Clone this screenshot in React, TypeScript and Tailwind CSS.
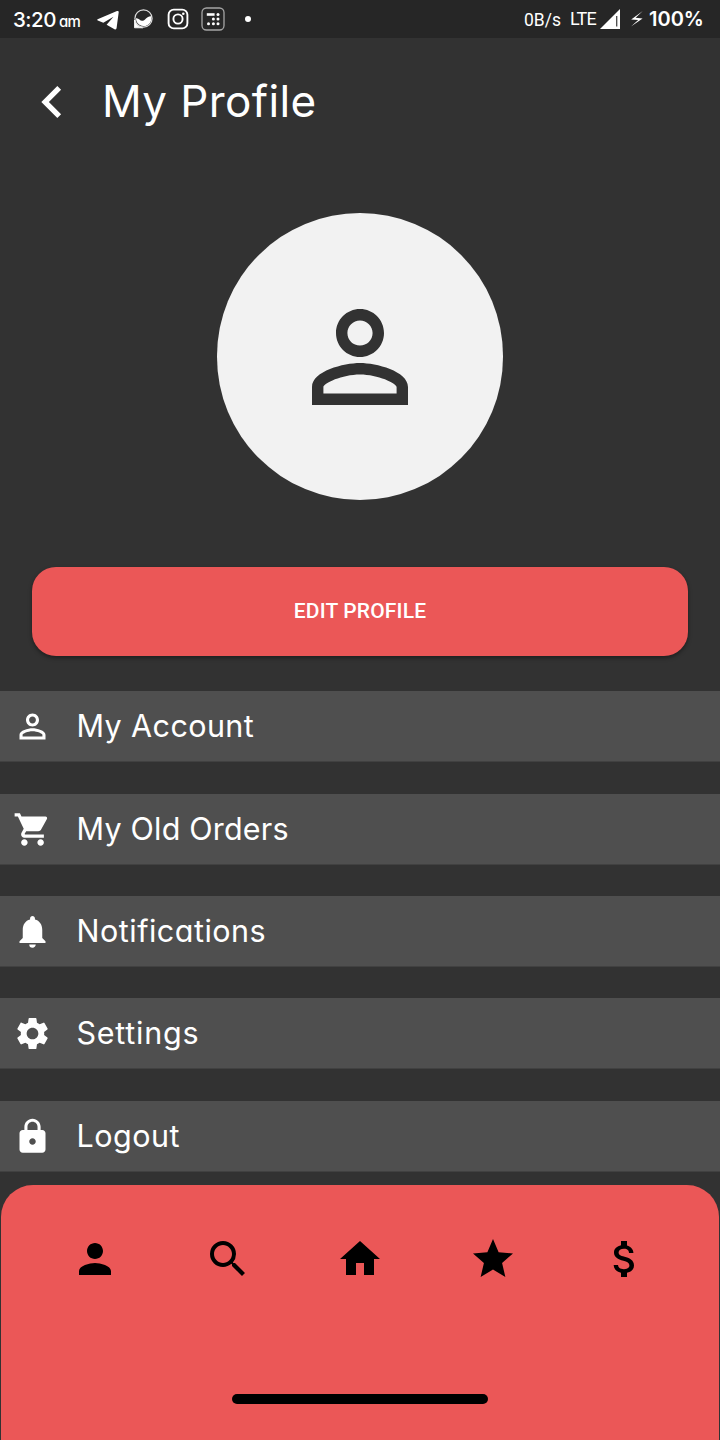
import React from "react";
import {
  MdAttachMoney,
  MdChevronLeft,
  MdHome,
  MdLock,
  MdNotifications,
  MdPerson,
  MdSearch,
  MdSettings,
  MdShoppingCart,
} from "react-icons/md";

function PersonOutline({ className }: { className: string }) {
  return (
    <svg viewBox="0 0 24 24" fill="currentColor" className={className}>
      <path d="M12 5.9c1.16 0 2.1.94 2.1 2.1s-.94 2.1-2.1 2.1S9.9 9.16 9.9 8s.94-2.1 2.1-2.1m0 9c2.97 0 6.1 1.46 6.1 2.1v1.1H5.9V17c0-.64 3.13-2.1 6.1-2.1M12 4C9.79 4 8 5.79 8 8s1.79 4 4 4 4-1.79 4-4-1.79-4-4-4zm0 9c-2.67 0-8 1.34-8 4v3h16v-3c0-2.66-5.33-4-8-4z" />
    </svg>
  );
}

function Star({ className }: { className: string }) {
  return (
    <svg viewBox="0 0 24 24" fill="currentColor" className={className}>
      <path d="M12 17.27 18.18 21l-1.64-7.03L22 9.24l-7.19-.61L12 2 9.19 8.63 2 9.24l5.46 4.73L5.82 21z" />
    </svg>
  );
}

function StatusBar() {
  return (
    <div className="flex h-[38px] shrink-0 items-center justify-between bg-[#262626] pl-[13px] pr-[17px]">
      <div className="flex items-center">
        <div className="flex w-[84px] items-baseline gap-[3px] whitespace-nowrap pt-[3px]">
          <span className="text-[20.5px] font-medium leading-6 tracking-[-0.5px]">3:20</span>
          <span className="text-[15px] font-medium leading-6 tracking-[-0.6px]">am</span>
        </div>
        <svg viewBox="0 0 22 20" className="mt-px h-5 w-[22px]" fill="#fff">
          <path d="M0.6 9.200 20 1.100q1.800-.6 1.700 1.200L19.600 18q-.3 2-2.100 1.200L9.600 14.800l6.900-8.100-10.200 6L0.800 10.600q-1-.7-.2-1.400z" />
        </svg>
        <svg viewBox="0 0 20 20" className="ml-[14px] h-5 w-5" fill="none">
          <circle cx="10.5" cy="9.5" r="8.600" stroke="#ddd" strokeWidth="1.200" />
          <path d="M1.500 11v7.800h8.200C5.500 18.200 2.300 15 1.500 11z" fill="#fff" stroke="#fff" strokeWidth=".8" />
          <path d="M3 9.200c2.700-.5 4 2.600 6 2.600 3.200 0 4.600-4.800 9-4.600 1.500 5-2 10.100-7.700 9.900C6 16.600 3 13.300 3 9.200z" fill="#fff" />
        </svg>
        <svg viewBox="0 0 22 22" className="ml-[14px] h-[22px] w-[22px]" fill="none" stroke="#fff" strokeWidth="1.900">
          <rect x="1.600" y="1.600" width="18.800" height="18.800" rx="5.200" />
          <circle cx="11" cy="11" r="4.600" />
          <circle cx="16.300" cy="5.700" r="1.300" fill="#fff" stroke="none" />
        </svg>
        <svg viewBox="0 0 24 24" className="ml-3 h-6 w-6" fill="none">
          <rect x="1" y="1" width="22" height="22" rx="4.500" stroke="#a5a5a5" strokeWidth="1.300" />
          <path d="M5.800 6.200h7.800v2.600H5.800z" fill="#fff" />
          <g fill="#fff">
            <circle cx="17" cy="7.500" r="1.500" />
            <circle cx="12.400" cy="12" r="1.500" />
            <circle cx="17" cy="12" r="1.500" />
            <circle cx="7.500" cy="16.700" r="1.500" />
            <circle cx="12.400" cy="16.700" r="1.500" />
            <circle cx="17" cy="16.700" r="1.500" />
          </g>
        </svg>
        <span className="ml-5 h-[6px] w-[6px] rounded-full bg-white" />
      </div>
      <div className="flex items-center whitespace-nowrap">
        <span className="w-[46px] pt-[2px] font-[Roboto,sans-serif] text-[17.5px] leading-6">0B/s</span>
        <span className="w-[30px] font-[Roboto,sans-serif] text-[18px] leading-6 tracking-[-0.8px]">LTE</span>
        <svg viewBox="0 0 20 20" className="h-5 w-5">
          <path d="M20 0v20H0z" fill="#fff" />
          <path d="M16.200 7h1.100v10.500h-1.100z" fill="#262626" />
        </svg>
        <svg viewBox="0 0 14 18" className="ml-[10px] h-[18px] w-[14px]" fill="#fff">
          <path d="M12.800 1 1.200 9.400 8.200 9.900 1 16.600 12.600 8.400 5.600 7.800z" />
        </svg>
        <span className="ml-[5px] w-[54px] text-[20px] font-semibold leading-6">100%</span>
      </div>
    </div>
  );
}

const rowIcon = "h-[39px] w-[39px] shrink-0";

const rows = [
  { label: "My Account", icon: <PersonOutline className={rowIcon} />, style: "mb-8", text: "tracking-[0.4px] text-[30.5px]" },
  { label: "My Old Orders", icon: <MdShoppingCart className={rowIcon} />, style: "mb-[31px]", text: "tracking-[0.2px] text-[30.5px]" },
  { label: "Notifications", icon: <MdNotifications className={rowIcon} />, style: "mb-[31px]", text: "tracking-[0.5px] text-[30.5px]" },
  { label: "Settings", icon: <MdSettings className={rowIcon} />, style: "mb-8", text: "tracking-[0.75px] text-[30.5px]" },
  { label: "Logout", icon: <MdLock className={rowIcon} />, style: "mb-[13px]", text: "tracking-[0.5px] text-[30.5px]" },
];

export default function App() {
  return (
    <div className="flex h-[1440px] w-[720px] flex-col overflow-hidden bg-[#323232] font-[Inter,sans-serif] text-white [font-feature-settings:'cv11']">
      <StatusBar />
      <header className="mt-8 flex h-16 shrink-0 items-center pl-5">
        <MdChevronLeft className="h-16 w-16" />
        <h1 className="ml-[18px] whitespace-nowrap pb-[2px] text-[44px] font-normal leading-[62px] tracking-[0.4px]">My Profile</h1>
      </header>
      <div className="mx-auto mt-[79px] flex h-[287px] w-[286px] shrink-0 items-center justify-center rounded-full bg-[#f2f2f2] text-[#323232]">
        <PersonOutline className="h-36 w-36" />
      </div>
      <button className="mx-8 mt-[67px] h-[89px] shrink-0 rounded-[24px] bg-[#eb5757] pb-px font-[Roboto,sans-serif] text-[21px] font-medium leading-6 tracking-[0.15px] shadow-[0_2px_4px_rgba(0,0,0,0.4)]">
        EDIT PROFILE
      </button>
      <ul className="mt-[35px]">
        {rows.map((row) => (
          <li key={row.label} className={`flex h-[71px] items-center border-b border-[#414141] bg-[#4f4f4f] pl-[12.5px] ${row.style}`}>
            {row.icon}
            <span className={`ml-[25px] whitespace-nowrap leading-10 ${row.text}`}>{row.label}</span>
          </li>
        ))}
      </ul>
      <nav className="mx-px flex flex-1 flex-col items-center rounded-t-[32px] bg-[#eb5757] text-black">
        <div className="mt-[50px] flex w-[578px] justify-between">
          <MdPerson className="h-12 w-12" />
          <MdSearch className="h-12 w-12" />
          <MdHome className="h-12 w-12" />
          <Star className="h-12 w-12" />
          <MdAttachMoney className="h-12 w-12" />
        </div>
        <div className="mt-[111px] h-[10px] w-64 rounded-full bg-black" />
      </nav>
    </div>
  );
}
